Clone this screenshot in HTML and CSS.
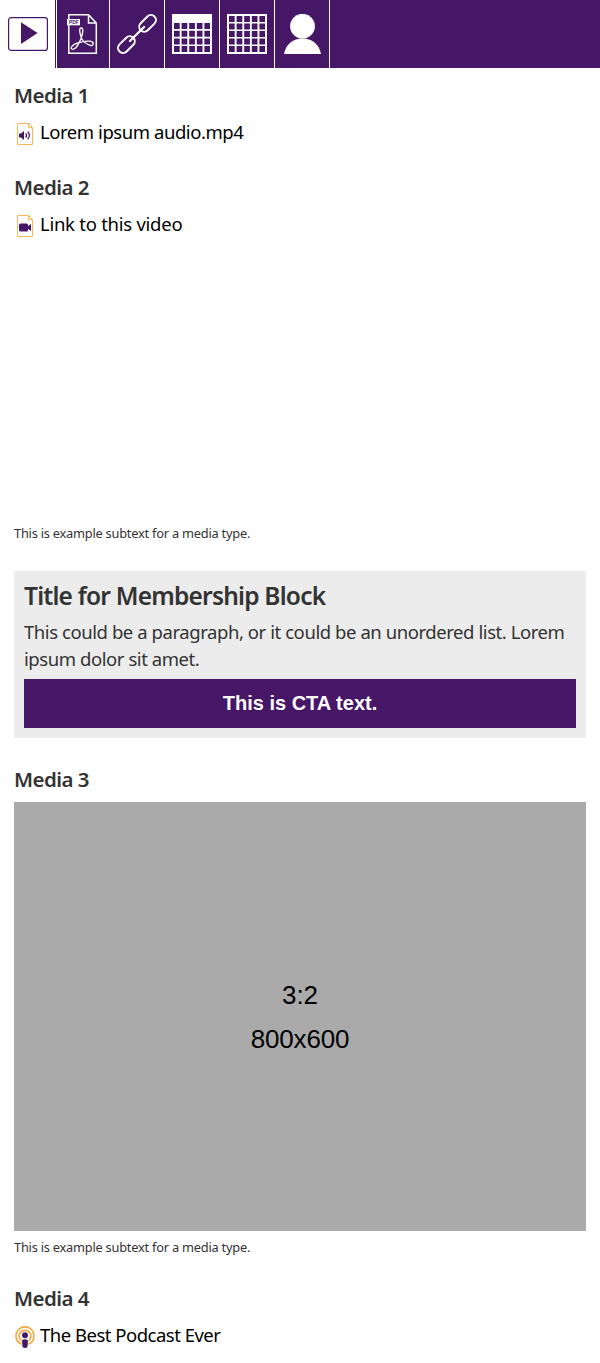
FILE: index.html
```html
<!DOCTYPE html>
<html lang="en">
<head>
<meta charset="utf-8">
<title>Media</title>
<link rel="stylesheet" href="styles.css">
</head>
<body>
<nav class="tabs">
  <a class="tab tab-active"><svg class="tab-icon" viewBox="0 0 40 40"><rect x=".6" y="3.6" width="38.8" height="32.8" rx="2.5" fill="none" stroke="#461667" stroke-width="1.2"/><path d="M13 8.2 29.6 19 13 30z" fill="#461667"/></svg></a>
  <a class="tab"><svg class="tab-icon" viewBox="0 0 40 40" fill="none" stroke="#fff" stroke-width="1.5"><path d="M5.8 5V.8H25.5L33.3 9V39.2H5.8V11M25.5.8V9h7.8"/><path d="M4 5h13v6.300H4z" fill="#fff" stroke="none"/><text class="pdf-label" x="6" y="10">PDF</text><path stroke-width="1.300" d="M18.800 25C16.500 19 15.800 13.800 18.200 13.800s2 5.200-.4 11.200C15.500 31 12 35.300 9.800 35.300c-3.300 0-1.500-4.600 5.200-6.500 5.500-1.600 9-2 12-1.600 4.500.7 3.800 5 .8 4.300-3.300-.8-7-3.500-9-6.500z"/></svg></a>
  <a class="tab tab-wide"><svg class="tab-icon" viewBox="0 0 40 40" fill="none" stroke="#fff" stroke-width="2"><g transform="rotate(-45 20 20)"><rect x="-4.700" y="15" width="19.500" height="10" rx="5"/><rect x="25.200" y="15" width="19.500" height="10" rx="5"/><path d="M10 20h20" stroke-width="2.200" stroke-linecap="round"/></g></svg></a>
  <a class="tab tab-wide"><svg class="tab-icon" viewBox="0 0 40 40"><path d="M0 0h40v40H0z" fill="#fff"/><g fill="#461667"><path id="cells" d="M2 9h5.700v6H2zm7.600 0h5.700v6H9.600zm7.600 0h5.700v6h-5.700zm7.600 0h5.700v6h-5.700zm7.600 0H38v6h-5.600z"/><use href="#cells" y="7.800"/><use href="#cells" y="15.500"/><use href="#cells" y="23"/></g></svg></a>
  <a class="tab tab-wide"><svg class="tab-icon" viewBox="0 0 40 40"><path d="M0 0h40v40H0z" fill="#fff"/><g fill="#461667"><use href="#cells" y="-7"/><use href="#cells" y=".5"/><use href="#cells" y="8"/><use href="#cells" y="15.500"/><use href="#cells" y="23"/></g></svg></a>
  <a class="tab"><svg class="tab-icon" viewBox="0 0 40 40" fill="#fff"><circle cx="19.500" cy="12.200" r="12.400"/><path d="M1 40C3 30 10 24.500 19.500 24.500S36 30 38 40z"/></svg></a>
</nav>
<main class="content">
  <h2 class="heading">Media 1</h2>
  <a class="link"><svg class="link-icon" viewBox="0 0 22 24"><path d="M3.500 1.500h11l4 4v17h-15zM14.500 1.500v4h4" fill="none" stroke="#fdb652"/><path d="M5 11.500h2l3-2.500v9l-3-2.500H5z" fill="#461667"/><path d="M11.700 11.500q1.700 2 0 4M13.700 9.800q3.500 3.700 0 7.400" fill="none" stroke="#461667" stroke-width="1.300"/></svg><span class="link-text">Lorem ipsum audio.mp4</span></a>
  <h2 class="heading heading-next">Media 2</h2>
  <a class="link"><svg class="link-icon" viewBox="0 0 22 24"><path d="M3.500 1.500h11l4 4v17h-15zM14.500 1.500v4h4" fill="none" stroke="#fdb652"/><rect x="5" y="9.500" width="9" height="8" rx="1.500" fill="#461667"/><path d="M13 13l4-3v7l-4-3z" fill="#461667"/></svg><span class="link-text link-text-video">Link to this video</span></a>
  <div class="video"></div>
  <p class="subtext">This is example subtext for a media type.</p>
  <section class="membership">
    <h2 class="membership-title">Title for Membership Block</h2>
    <p class="membership-text">This could be a paragraph, or it could be an unordered list. Lorem ipsum dolor sit amet.</p>
    <a class="cta">This is CTA text.</a>
  </section>
  <h2 class="heading">Media 3</h2>
  <div class="placeholder"><span>3:2</span><span class="placeholder-size">800x600</span></div>
  <p class="subtext">This is example subtext for a media type.</p>
  <h2 class="heading heading-last">Media 4</h2>
  <a class="link"><svg class="link-icon" viewBox="0 0 22 24"><g fill="none" stroke="#f6a83d" stroke-width="1.600"><path d="M7.500 19.200a9 9 0 1 1 7 0"/><path d="M7.400 15.800a5.900 5.900 0 1 1 7.200 0"/></g><circle cx="11" cy="10.300" r="3" fill="#461667"/><path d="M8 15.500q3-2.500 6 0l-.5 6.500q-2.500 2-5 0z" fill="#461667"/></svg><span class="link-text link-text-podcast">The Best Podcast Ever</span></a>
</main>
</body>
</html>
```

FILE: styles.css
```css
* { box-sizing: border-box; }
body {
  margin: 0;
  background: #fff;
  color: #333;
  font-family: "Noto Sans", "Open Sans", sans-serif;
}
h2, p { margin: 0; }
svg { display: block; }
.tabs { display: flex; height: 68px; background: #461667; }
.tab { width: 55px; height: 68px; padding: 14px 6px 14px 8px; border-right: 1px solid #fff; }
.tab-wide { padding: 14px 7px; }
.tab-active { background: #fff; }
.tab-active + .tab { background: linear-gradient(90deg, #461667 1px, #fff 1px 2px, transparent 2px); }
.tab-icon { width: 40px; height: 40px; }
.pdf-label { font: bold 4.8px "Liberation Sans", sans-serif; fill: #461667; stroke: none; }
.content { padding: 13px 14px 0; }
.heading { padding-bottom: 2px; font-size: 20.5px; line-height: 28px; font-weight: 600; letter-spacing: -0.55px; }
.heading-next { margin-top: 26px; }
.link { display: flex; align-items: center; gap: 4px; height: 26px; margin-top: 10px; color: #000; font-size: 18.5px; line-height: 26px; white-space: nowrap; }
.link-text { padding-bottom: 5px; letter-spacing: -0.44px; }
.link-text-video { letter-spacing: -0.26px; }
.link-text-podcast { letter-spacing: -0.5px; }
.link-icon { width: 22px; height: 24px; }
.video { height: 285px; }
.subtext { padding-bottom: 2px; font-size: 12.8px; line-height: 18px; letter-spacing: -0.22px; }
.membership { height: 167px; margin: 27px 0; padding: 10px; background: #ececec; }
.membership-title { font-size: 24.5px; line-height: 30px; font-weight: 600; letter-spacing: -0.79px; white-space: nowrap; }
.membership-text { margin: 7px 0; font-size: 18.5px; line-height: 27px; letter-spacing: -0.43px; }
.cta { display: flex; height: 49px; align-items: center; justify-content: center; background: #461667; color: #fff; font: bold 20px "Liberation Sans", sans-serif; }
.placeholder { display: flex; flex-direction: column; align-items: center; justify-content: center; height: 429px; margin: 7px 0; background: #aaa; color: #000; font: 26px/44px "Liberation Sans", sans-serif; }
.placeholder-size { letter-spacing: -0.2px; }
.heading-last { margin-top: 26px; }
```
